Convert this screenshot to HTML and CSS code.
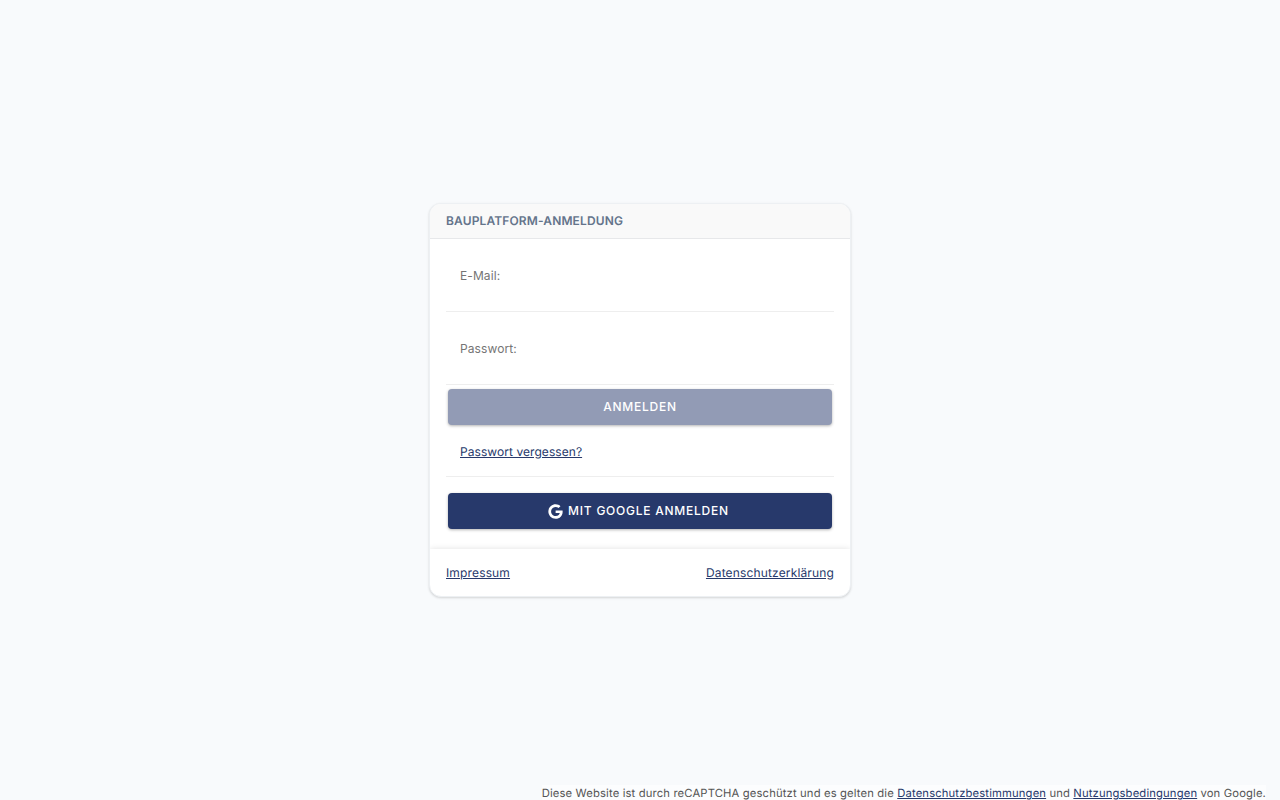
FILE: index.html
```
<!DOCTYPE html>
<html lang="de">
<head>
<meta charset="utf-8">
<title>Bauplatform-Anmeldung</title>
<link rel="stylesheet" href="styles.css">
</head>
<body>
<main class="page">
  <section class="card">
    <h1 class="card-header">BAUPLATFORM-ANMELDUNG</h1>
    <form class="card-body">
      <input class="field" type="email" placeholder="E-Mail:" aria-label="E-Mail">
      <input class="field" type="password" placeholder="Passwort:" aria-label="Passwort">
      <button class="button button-disabled" type="button" disabled>ANMELDEN</button>
      <div class="forgot"><a href="#">Passwort vergessen?</a></div>
      <button class="button button-google" type="button">
        <svg class="google-icon" viewBox="0 0 488 512" aria-hidden="true"><path fill="currentColor" d="M488 261.8C488 403.3 391.1 504 248 504 110.8 504 0 393.2 0 256S110.8 8 248 8c66.8 0 123 24.5 166.3 64.9l-67.5 64.9C258.5 52.6 94.3 116.6 94.3 256c0 86.5 69.1 156.6 153.7 156.6 98.2 0 135-70.4 140.8-106.9H248v-85.3h236.1c2.3 12.7 3.9 24.9 3.9 41.4z"/></svg>
        <span>MIT GOOGLE ANMELDEN</span>
      </button>
    </form>
    <nav class="card-footer"><a href="#">Impressum</a><a href="#">Datenschutzerklärung</a></nav>
  </section>
</main>
<footer class="notice">Diese Website ist durch reCAPTCHA geschützt und es gelten die <a href="#">Datenschutzbestimmungen</a> und <a href="#">Nutzungsbedingungen</a> von Google.</footer>
</body>
</html>
```
FILE: styles.css
```
* { box-sizing: border-box; }
body {
  margin: 0;
  height: 800px;
  overflow: hidden;
  position: relative;
  background: #f8fafc;
  color: #555;
  font: 12px/16px Inter, "Liberation Sans", sans-serif;
  text-rendering: geometricPrecision;
  -webkit-font-smoothing: antialiased;
}
a { color: #27396b; text-decoration: underline; }
.page { height: 100%; display: flex; align-items: center; justify-content: center; }
.card {
  width: 422px;
  height: 394px;
  border: 1px solid #edf0f3;
  border-radius: 12px;
  background: #fff;
  overflow: hidden;
  box-shadow: 0 1px 3px rgba(0, 0, 0, .1), 0 1px 2px rgba(0, 0, 0, .06);
}
.card-header {
  margin: 0;
  height: 35px;
  padding: 9px 16px;
  background: #f9f9f9;
  border-bottom: 1px solid #e7e8ea;
  color: #64748b;
  font-size: 12px;
  line-height: 16px;
  font-weight: 600;
  letter-spacing: .13px;
}
.card-body { height: 310px; padding: 0 16px; display: flex; flex-direction: column; }
.field {
  width: 100%;
  height: 73px;
  flex: none;
  padding: 0 14px;
  border: 0;
  border-bottom: 1px solid #eee;
  background: transparent;
  font: inherit;
  letter-spacing: .1px;
}
.field::placeholder { color: #757575; }
.button {
  height: 36px;
  flex: none;
  margin: 0 2px;
  padding: 0;
  border: 0;
  border-radius: 4px;
  display: flex;
  align-items: center;
  justify-content: center;
  color: #fff;
  font: 500 12px/16px Inter, sans-serif;
  letter-spacing: .76px;
  box-shadow: 0 1px 3px rgba(0, 0, 0, .3);
}
.button-disabled { margin-top: 4px; background: #929bb5; }
.forgot { height: 52px; padding: 19px 14px 0; border-bottom: 1px solid #eee; letter-spacing: .06px; }
.button-google { margin-top: 16px; padding-right: 3px; background: #27396b; }
.google-icon { width: 15px; height: 15px; margin-right: 5px; }
.card-footer {
  height: 47px;
  padding: 1px 16px 0;
  display: flex;
  justify-content: space-between;
  align-items: center;
  letter-spacing: .15px;
  box-shadow: 0 0 6px rgba(0, 0, 0, .12);
}
.notice {
  position: absolute;
  right: 14px;
  bottom: -1px;
  background: rgba(255, 255, 255, .5);
  font-size: 11.25px;
  line-height: 16px;
  letter-spacing: .14px;
  white-space: nowrap;
}
```
